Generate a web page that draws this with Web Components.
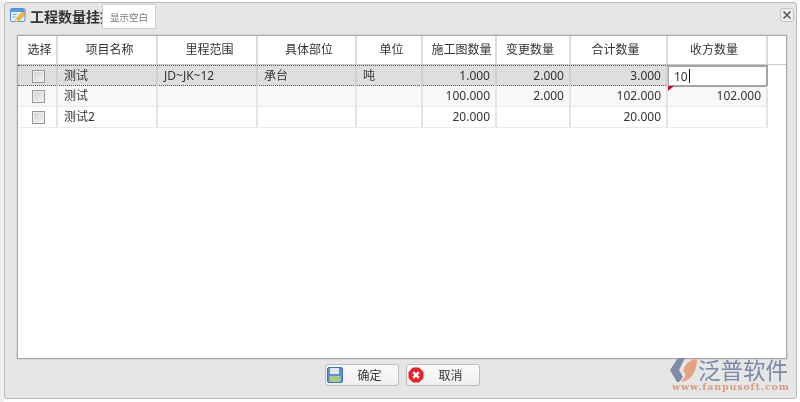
<!DOCTYPE html>
<html lang="zh"><head><meta charset="utf-8"><title>工程数量挂接</title>
<style>
html,body{margin:0;padding:0;background:#fff}
body{width:800px;height:402px;overflow:hidden;font:12px "Noto Sans","Noto Sans CJK SC",sans-serif;color:#333}
</style></head><body>
<fp-screen>
  <fp-dialog heading="工程数量挂接">
    <fp-tip slot="tip">显示空白</fp-tip>
    <fp-grid>
      <fp-row kind="head"><fp-cell>选择</fp-cell><fp-cell>项目名称</fp-cell><fp-cell>里程范围</fp-cell><fp-cell>具体部位</fp-cell><fp-cell>单位</fp-cell><fp-cell>施工图数量</fp-cell><fp-cell end>变更数量</fp-cell><fp-cell end>合计数量</fp-cell><fp-cell end>收方数量</fp-cell><fp-cell kind="fill"></fp-cell></fp-row>
      <fp-row kind="sel"><fp-cell align="c"><fp-check></fp-check></fp-cell><fp-cell>测试</fp-cell><fp-cell>JD~JK~12</fp-cell><fp-cell>承台</fp-cell><fp-cell>吨</fp-cell><fp-cell align="r">1.000</fp-cell><fp-cell align="r">2.000</fp-cell><fp-cell align="r">3.000</fp-cell><fp-cell kind="edit">10</fp-cell></fp-row>
      <fp-row kind="alt"><fp-cell align="c"><fp-check></fp-check></fp-cell><fp-cell>测试</fp-cell><fp-cell></fp-cell><fp-cell></fp-cell><fp-cell></fp-cell><fp-cell align="r">100.000</fp-cell><fp-cell align="r">2.000</fp-cell><fp-cell align="r">102.000</fp-cell><fp-cell align="r" dirty>102.000</fp-cell></fp-row>
      <fp-row><fp-cell align="c"><fp-check></fp-check></fp-cell><fp-cell>测试2</fp-cell><fp-cell></fp-cell><fp-cell></fp-cell><fp-cell></fp-cell><fp-cell align="r">20.000</fp-cell><fp-cell align="r"></fp-cell><fp-cell align="r">20.000</fp-cell><fp-cell></fp-cell></fp-row>
    </fp-grid>
    <fp-button slot="foot" icon="save">确定</fp-button>
    <fp-button slot="foot" icon="cancel">取消</fp-button>
    <fp-logo slot="logo"></fp-logo>
  </fp-dialog>
</fp-screen>
<script>
function def(name,css,html){
  customElements.define(name,class extends HTMLElement{
    connectedCallback(){
      if(this.shadowRoot)return;
      const r=this.attachShadow({mode:'open'});
      r.innerHTML='<style>'+css+'</style>'+(typeof html==='function'?html(this):html);
    }
  });
}
def('fp-screen',`:host{display:block;width:800px;height:402px;box-sizing:border-box;padding:2px 3px 2px 4px;background:linear-gradient(90deg,#ececec 0,#f2f2f2 4px,#fdfdfd 4px);filter:blur(.35px)}`,`<slot></slot>`);
def('fp-dialog',`
:host{display:flex;flex-direction:column;position:relative;height:397px;box-sizing:border-box;background:#e6e6e6;border:1px solid #b9b9b9;border-radius:3px}
.bar{display:flex;align-items:flex-start;height:32px;box-sizing:border-box;padding:4px 2px 0 5px;gap:4px;flex:none}
h1{margin:0;font:bold 14px/18px "Noto Sans CJK SC",sans-serif;color:#333;flex:1;white-space:nowrap}
.x{width:14px;height:14px;box-sizing:border-box;margin-top:1px;border:1px solid #c2c2c2;border-radius:3px;background:#f1f1f1;display:flex;align-items:center;justify-content:center}
.panel{flex:1;margin:0 9px 0 12px;background:#fff;border:1px solid #a9a6a4;box-shadow:0 0 0 .5px #c9c6c4;min-height:0}
.foot{display:flex;justify-content:center;gap:7px;height:39px;box-sizing:border-box;padding:5px 0 0 4px;flex:none}
.tip{position:absolute;left:97px;top:1px}
.logo{position:absolute;left:665px;top:354px}
`,d=>`<div class="bar">
<svg width="16" height="16" viewBox="0 0 16 16"><rect x=".5" y="1.500" width="14.500" height="13" rx="1.500" fill="#e8f0f9" stroke="#4f92d6"/><rect x="1" y="2" width="13.500" height="3" fill="#5a9be0"/><path d="M2.500 7.500h4M2.500 10h3" stroke="#7aa6d4"/><path d="M5 15l1.200-3.500L13 4.500l2.500 2.500-7 7z" fill="#f5b53a" stroke="#c68a22" stroke-width=".6"/><path d="M5 15l1.200-3.500 2.300 2.400z" fill="#f3e2b8"/></svg>
<h1>${d.getAttribute('heading')}</h1>
<div class="x"><svg width="10" height="10" viewBox="0 0 10 10"><path d="M1.500 1.500l7 7M8.500 1.500l-7 7" stroke="#555" stroke-width="1.600"/></svg></div></div>
<div class="tip"><slot name="tip"></slot></div>
<div class="panel"><slot></slot></div>
<div class="foot"><slot name="foot"></slot></div>
<div class="logo"><slot name="logo"></slot></div>`);
def('fp-tip',`:host{display:flex;align-items:center;justify-content:center;width:54px;height:25px;background:#fff;border:1px solid #cfcfcf;box-sizing:border-box;font:9.500px "Noto Sans CJK SC",sans-serif;color:#777}`,`<slot></slot>`);
def('fp-grid',`:host{display:block;font:12px "Noto Sans","Noto Sans CJK SC",sans-serif}`,`<slot></slot>`);
def('fp-row',`
:host{display:grid;grid-template-columns:40px 100px 100px 99px 66px 74px 74px 97px 100px;height:21px;box-sizing:border-box;border-bottom:1px solid #eaeaea;background:#fff;width:750px}
:host([kind=head]){grid-template-columns:40px 100px 100px 99px 66px 74px 74px 97px 100px 18px;width:768px;height:29px;border-bottom:1px solid #c9c9c9;--sep:#dcdcdc;--align:center;--pl:5px;--pr:0px}
:host([kind=sel]){background:#dedede;border-top:1px dotted #555;border-bottom:1px dotted #555;--sep:#cfcfcf}
:host([kind=alt]){background:#f8f8f8}
`,`<slot></slot>`);
def('fp-cell',`
:host{display:flex;align-items:center;position:relative;box-sizing:border-box;padding:0 var(--pr,5px) 2px var(--pl,6px);border-right:2px solid var(--sep,#e4e4e4);color:#333;white-space:nowrap;justify-content:var(--align,flex-start);min-width:0}
:host([end]){padding-left:0;padding-right:6px}
:host([kind=fill]){border-right:0}
:host([align=r]){justify-content:flex-end;padding-left:0;padding-right:5px}
:host([align=c]){justify-content:center;padding:0 0 0 3px}
:host([kind=edit]){background:#fff;border:2px solid #a4a4a4;border-left-width:1px;padding:0 4px 0 5px;margin-top:-1px;margin-bottom:-1px}
.caret{display:inline-block;width:1px;height:14px;background:#111;margin-left:1px}
.flag{position:absolute;left:0;top:0;width:0;height:0;border-top:5px solid #c8102e;border-right:6px solid transparent}
`,c=>`${c.hasAttribute('dirty')?'<i class="flag"></i>':''}<slot></slot>${c.getAttribute('kind')==='edit'?'<i class="caret"></i>':''}`);
def('fp-check',`:host{display:block;width:13px;height:13px;box-sizing:border-box;border:1px solid #979797;background:linear-gradient(135deg,#cfcfcf,#f6f6f6);box-shadow:inset 0 0 0 1px #efefef}`,``);
def('fp-button',`
:host{display:flex;align-items:center;width:74px;height:22px;box-sizing:border-box;border:1px solid #bcbcbc;border-radius:3px;background:linear-gradient(#fafafa,#efefef);font:12px "Noto Sans CJK SC",sans-serif;color:#333}
svg{flex:none;margin-left:1px}
span{flex:1;text-align:center;padding:0 2px 2px 0}
`,b=>(b.getAttribute('icon')==='save'
?`<svg width="16" height="16" viewBox="0 0 16 16"><rect x=".5" y=".5" width="15" height="15" rx="1.500" fill="#5c90d2" stroke="#3f72b6"/><rect x="3" y="1" width="9" height="6" fill="#dfe9f6"/><rect x="2.500" y="9" width="11" height="6" fill="#a8cb8a"/></svg>`
:`<svg width="16" height="16" viewBox="0 0 16 16"><path d="M5 .5h6L15.500 5v6L11 15.500H5L.5 11V5z" fill="#e8202a"/><path d="M5.200 5.200l5.600 5.600M10.800 5.200l-5.600 5.600" stroke="#fff" stroke-width="2.500"/></svg>`)+`<span><slot></slot></span>`);
def('fp-logo',`
:host{display:block;width:125px;height:42px;position:relative}
.cn{position:absolute;left:28px;top:0;font:22.500px/24px "Noto Sans CJK SC",sans-serif;color:#7a89a6;white-space:nowrap}
.en{position:absolute;left:2px;top:26px;font:bold 9.500px/8px "DejaVu Serif",serif;color:#d69b82;letter-spacing:.85px;white-space:nowrap}
svg{position:absolute;left:0;top:1px}
`,`<svg width="28" height="25" viewBox="0 0 28 25"><path d="M8 0h7L9 12l4 7-4 5H7L0 12z" fill="#7f8ba8"/><path d="M27 1c0 10-4 21-15 23l-1-1c5-3 6-8 2-10C15 6 20 1 27 1z" fill="#e3a381"/></svg><div class="cn">泛普软件</div><div class="en">www.fanpusoft.com</div>`);
</script>
</body></html>
